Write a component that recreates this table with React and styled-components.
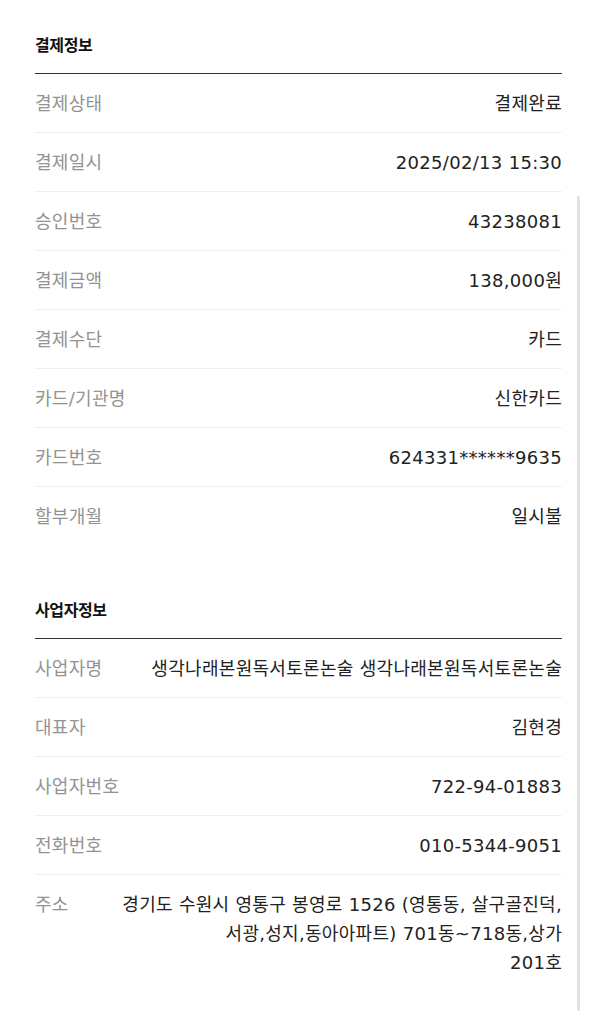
import styled, { createGlobalStyle } from "styled-components";

const GlobalStyle = createGlobalStyle`
  html, body {
    margin: 0;
    padding: 0;
    background: #ffffff;
  }
  body {
    font-family: "DejaVu Sans", "Noto Sans CJK KR", sans-serif;
    color: #222;
  }
`;

const Page = styled.div`
  position: relative;
  padding: 0 34px 0 35px;
`;

const Section = styled.section`
  padding: 32px 0 20px;
`;

const Title = styled.h2`
  margin: 0;
  padding-bottom: 17px;
  border-bottom: 1px solid #333;
  font-family: "Noto Sans CJK KR", sans-serif;
  font-size: 16px;
  line-height: 24px;
  font-weight: 700;
  color: #111;
  letter-spacing: -0.4px;
`;

const Row = styled.div`
  display: flex;
  align-items: flex-start;
  justify-content: space-between;
  gap: 24px;
  padding: 15px 0 14px;
  border-bottom: ${(p) => (p.last ? "none" : "1px solid #f0f0f0")};
  font-size: 18px;
  line-height: 29px;
  letter-spacing: 0.3px;
`;

const Label = styled.span`
  flex-shrink: 0;
  color: #939393;
`;

const Value = styled.span`
  flex: 1;
  text-align: right;
  color: #222;
  word-break: keep-all;
`;

const ScrollThumb = styled.div`
  position: absolute;
  top: 196px;
  right: 16px;
  width: 3px;
  height: 819px;
  border-radius: 2px;
  background: #e2e2e2;
`;

const payment = [
  ["결제상태", ["결제완료"]],
  ["결제일시", ["2025/02/13 15:30"]],
  ["승인번호", ["43238081"]],
  ["결제금액", ["138,000원"]],
  ["결제수단", ["카드"]],
  ["카드/기관명", ["신한카드"]],
  ["카드번호", ["624331******9635"]],
  ["할부개월", ["일시불"]],
];

const business = [
  ["사업자명", ["생각나래본원독서토론논술 생각나래본원독서토론논술"]],
  ["대표자", ["김현경"]],
  ["사업자번호", ["722-94-01883"]],
  ["전화번호", ["010-5344-9051"]],
  [
    "주소",
    [
      "경기도 수원시 영통구 봉영로 1526 (영통동, 살구골진덕,",
      "서광,성지,동아아파트) 701동~718동,상가",
      "201호",
    ],
  ],
];

const InfoSection = ({ title, rows }) => (
  <Section>
    <Title>{title}</Title>
    {rows.map(([label, lines], i) => (
      <Row key={label} last={i === rows.length - 1}>
        <Label>{label}</Label>
        <Value>
          {lines.map((line, j) => (
            <span key={j}>
              {j > 0 && <br />}
              {line}
            </span>
          ))}
        </Value>
      </Row>
    ))}
  </Section>
);

export default function App() {
  return (
    <>
      <GlobalStyle />
      <Page>
        <InfoSection title="결제정보" rows={payment} />
        <InfoSection title="사업자정보" rows={business} />
        <ScrollThumb />
      </Page>
    </>
  );
}
